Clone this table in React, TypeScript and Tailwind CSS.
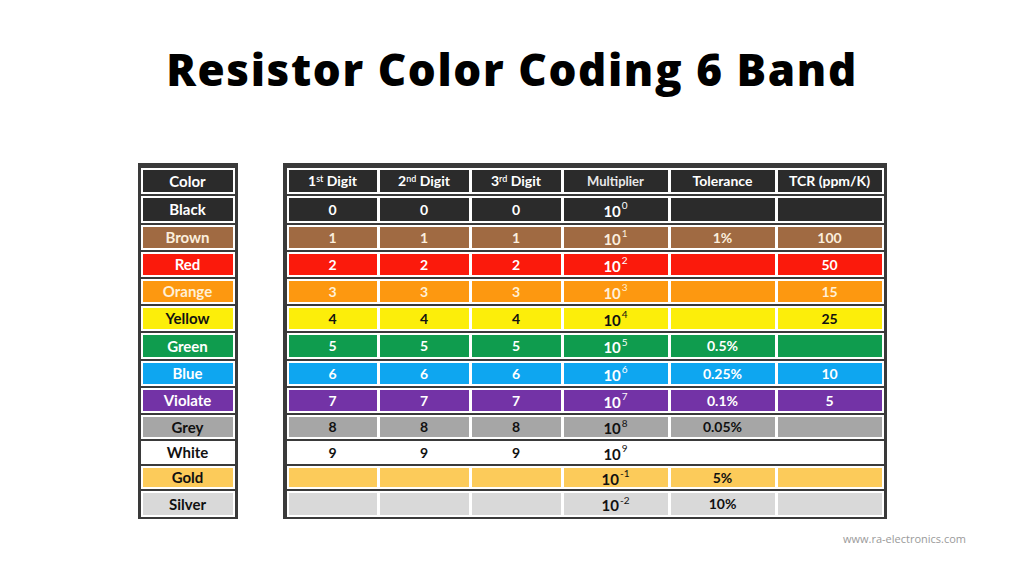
import React from "react";

type Row = {
  name: string;
  bg: string;
  fg: string;
  h: string;
  d: string;
  exp: string;
  tol: string;
  tcr: string;
};

const rows: Row[] = [
  { name: "Black", bg: "bg-[#2b2b2b]", fg: "text-white", h: "h-[27px]", d: "0", exp: "0", tol: "", tcr: "" },
  { name: "Brown", bg: "bg-[#a06a42]", fg: "text-[#fbeedd]", h: "h-[25px]", d: "1", exp: "1", tol: "1%", tcr: "100" },
  { name: "Red", bg: "bg-[#fb1a0c]", fg: "text-white", h: "h-[25px]", d: "2", exp: "2", tol: "", tcr: "50" },
  { name: "Orange", bg: "bg-[#fd9810]", fg: "text-[#fff0d8]", h: "h-[25px]", d: "3", exp: "3", tol: "", tcr: "15" },
  { name: "Yellow", bg: "bg-[#fcee0a]", fg: "text-[#111]", h: "h-[25px]", d: "4", exp: "4", tol: "", tcr: "25" },
  { name: "Green", bg: "bg-[#0f9c4e]", fg: "text-white", h: "h-[26px]", d: "5", exp: "5", tol: "0.5%", tcr: "" },
  { name: "Blue", bg: "bg-[#0ea6f0]", fg: "text-white", h: "h-[25px]", d: "6", exp: "6", tol: "0.25%", tcr: "10" },
  { name: "Violate", bg: "bg-[#7333a6]", fg: "text-white", h: "h-[25px]", d: "7", exp: "7", tol: "0.1%", tcr: "5" },
  { name: "Grey", bg: "bg-[#a6a6a6]", fg: "text-[#111]", h: "h-[24px]", d: "8", exp: "8", tol: "0.05%", tcr: "" },
  { name: "White", bg: "bg-white", fg: "text-[#111]", h: "h-[23px]", d: "9", exp: "9", tol: "", tcr: "" },
  { name: "Gold", bg: "bg-[#fccb5a]", fg: "text-[#111]", h: "h-[23px]", d: "", exp: "-1", tol: "5%", tcr: "" },
  { name: "Silver", bg: "bg-[#d9d9d9]", fg: "text-[#111]", h: "h-[26px]", d: "", exp: "-2", tol: "10%", tcr: "" },
];

const font = { fontFamily: "Lato, 'Open Sans', sans-serif" };

function Cell({ w, bg, fg, children, size = "text-[14px]" }: { w: string; bg: string; fg: string; children?: React.ReactNode; size?: string }) {
  return (
    <div className={`${w} ${bg} ${fg} ${size} flex items-center justify-center font-bold leading-none`}>
      {children}
    </div>
  );
}

export default function App() {
  return (
    <div className="w-[1024px] h-[576px] bg-white flex flex-col overflow-hidden" style={font}>
      <h1
        className="mt-[47px] text-center text-[44px] leading-[44px] font-extrabold text-black tracking-[1.6px]"
        style={{ fontFamily: "'Open Sans', sans-serif" }}
      >
        Resistor Color Coding 6 Band
      </h1>

      <div className="mt-[72px] flex justify-center gap-[45px]">
        {/* Left color column */}
        <div className="w-[100px] bg-[#3a3a3a] pt-[5px] pb-[2px] px-[3px] flex flex-col gap-[2px]">
          <div className="h-[26px] bg-white p-[2px] flex">
            <Cell w="flex-1" bg="bg-[#2b2b2b]" fg="text-white" size="text-[15px]">Color</Cell>
          </div>
          {rows.map((r) => (
            <div key={r.name} className={`${r.h} bg-white p-[2px] flex`}>
              <Cell w="flex-1" bg={r.bg} fg={r.fg} size="text-[15px]">{r.name}</Cell>
            </div>
          ))}
        </div>

        {/* Right values table */}
        <div className="w-[604px] bg-[#3a3a3a] pt-[5px] pb-[2px] pl-[4px] pr-[3px] flex flex-col gap-[2px]">
          <div className="h-[26px] bg-white p-[2px] flex gap-[3px]">
            <Cell w="w-[88px]" bg="bg-[#2b2b2b]" fg="text-white">
              <span>1<sup className="text-[9px] font-semibold">st</sup> Digit</span>
            </Cell>
            <Cell w="w-[89px]" bg="bg-[#2b2b2b]" fg="text-white">
              <span>2<sup className="text-[9px] font-semibold">nd</sup> Digit</span>
            </Cell>
            <Cell w="w-[89px]" bg="bg-[#2b2b2b]" fg="text-white">
              <span>3<sup className="text-[9px] font-semibold">rd</sup> Digit</span>
            </Cell>
            <Cell w="w-[104px]" bg="bg-[#2b2b2b]" fg="text-[#e8e8e8]" size="text-[13px]">Multiplier</Cell>
            <Cell w="w-[104px]" bg="bg-[#2b2b2b]" fg="text-white">Tolerance</Cell>
            <Cell w="w-[104px]" bg="bg-[#2b2b2b]" fg="text-white">TCR (ppm/K)</Cell>
          </div>
          {rows.map((r) => (
            <div key={r.name} className={`${r.h} bg-white p-[2px] flex gap-[3px]`}>
              <Cell w="w-[88px]" bg={r.bg} fg={r.fg}>{r.d}</Cell>
              <Cell w="w-[89px]" bg={r.bg} fg={r.fg}>{r.d}</Cell>
              <Cell w="w-[89px]" bg={r.bg} fg={r.fg}>{r.d}</Cell>
              <Cell w="w-[104px]" bg={r.bg} fg={r.fg} size="text-[15px]">
                <span className="pt-[3px]">
                  10<sup className="text-[10px] font-normal top-[-0.75em] ml-[1px]">{r.exp}</sup>
                </span>
              </Cell>
              <Cell w="w-[104px]" bg={r.bg} fg={r.fg}>{r.tol}</Cell>
              <Cell w="w-[104px]" bg={r.bg} fg={r.fg}>{r.tcr}</Cell>
            </div>
          ))}
        </div>
      </div>

      <div
        className="mt-[12px] pr-[58px] text-right text-[11px] leading-[16px] text-[#9a9a9a]"
        style={{ fontFamily: "'Open Sans', sans-serif" }}
      >
        www.ra-electronics.com
      </div>
    </div>
  );
}
